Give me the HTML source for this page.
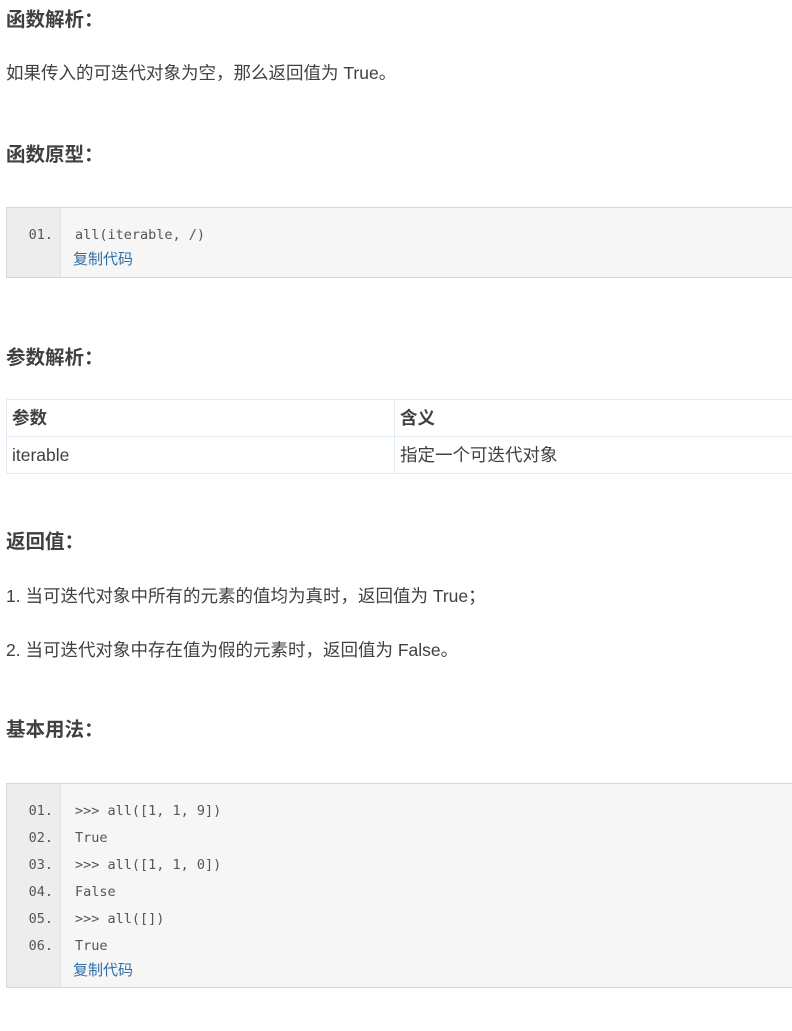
<!DOCTYPE html>
<html><head><meta charset="utf-8"><style>
body{margin:0;width:792px;height:1031px;background:#fff;position:relative;overflow:hidden;font-family:"Liberation Sans","Noto Sans CJK SC",sans-serif;color:#404040}
h{position:absolute;left:6px;font-size:19.5px;font-weight:bold;color:#404040;line-height:26px}
p{position:absolute;left:6px;margin:0;font-size:17.5px;line-height:22px;white-space:nowrap}
.code{position:absolute;left:6px;width:800px;border:1px solid #d6d6d6;background:#f6f6f6;box-sizing:border-box}
.g{position:absolute;left:0;top:0;bottom:0;width:53px;background:#ededed;border-right:1px solid #e0e0e0}
.ln{position:absolute;left:0;width:46px;text-align:right;font:13.5px "DejaVu Sans Mono","Liberation Mono",monospace;color:#555;line-height:18px}
.c{position:absolute;left:68px;font:13.5px "DejaVu Sans Mono","Liberation Mono",monospace;color:#555;line-height:18px;white-space:nowrap}
.cp{position:absolute;left:66px;font-size:15px;color:#2f6ea7;line-height:18px;font-family:"Liberation Sans","Noto Sans CJK SC",sans-serif}
table{position:absolute;left:6px;top:399px;border-collapse:collapse;width:800px;font-size:17.5px}
td{border:1px solid #e3ecf4;height:37px;padding:0 5px;box-sizing:border-box;line-height:22px;vertical-align:middle}
</style></head><body>
<h style="top:7px">函数解析：</h>
<p style="top:62px">如果传入的可迭代对象为空，那么返回值为 True。</p>
<h style="top:142px">函数原型：</h>
<div class="code" style="top:207px;height:71px"><div class="g"></div>
<div class="ln" style="top:18px">01.</div><div class="c" style="top:18px">all(iterable, /)</div>
<div class="cp" style="top:43px">复制代码</div></div>
<h style="top:345px">参数解析：</h>
<table><tr><td style="width:388px;font-weight:bold">参数</td><td style="font-weight:bold">含义</td></tr>
<tr><td>iterable</td><td>指定一个可迭代对象</td></tr></table>
<h style="top:529px">返回值：</h>
<p style="top:585px">1. 当可迭代对象中所有的元素的值均为真时，返回值为 True；</p>
<p style="top:639px">2. 当可迭代对象中存在值为假的元素时，返回值为 False。</p>
<h style="top:717px">基本用法：</h>
<div class="code" style="top:783px;height:205px"><div class="g"></div>
<div class="ln" style="top:18px">01.</div><div class="c" style="top:18px">&gt;&gt;&gt; all([1, 1, 9])</div>
<div class="ln" style="top:45px">02.</div><div class="c" style="top:45px">True</div>
<div class="ln" style="top:72px">03.</div><div class="c" style="top:72px">&gt;&gt;&gt; all([1, 1, 0])</div>
<div class="ln" style="top:99px">04.</div><div class="c" style="top:99px">False</div>
<div class="ln" style="top:126px">05.</div><div class="c" style="top:126px">&gt;&gt;&gt; all([])</div>
<div class="ln" style="top:153px">06.</div><div class="c" style="top:153px">True</div>
<div class="cp" style="top:178px">复制代码</div></div>
</body></html>
